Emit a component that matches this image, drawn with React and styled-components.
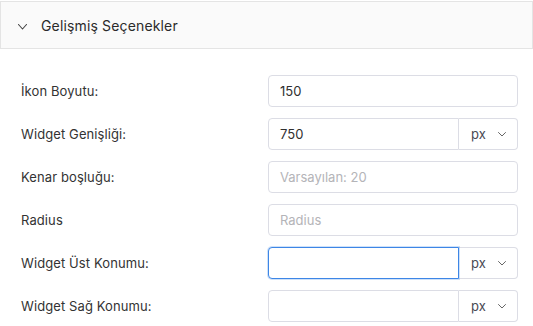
import React from "react";
import styled, { createGlobalStyle } from "styled-components";

const Global = createGlobalStyle`
  html, body { margin: 0; padding: 0; background: #fff; }
  body { font-family: Inter, "Noto Sans", sans-serif; color: #2b2b2b; }
  * { box-sizing: border-box; }
`;

const Panel = styled.div`
  width: 533px;
  padding-top: 1px;
`;

const Header = styled.div`
  height: 48px;
  display: flex;
  align-items: center;
  gap: 14px;
  padding-left: 17px;
  background: #fafafa;
  border: 1px solid #e4e4e4;
  font-size: 14px;
  color: #2a2a2a;
  letter-spacing: 0.15px;
`;

const HeaderIcon = styled.span`
  display: flex;
  margin-top: 3px;
`;

const Body = styled.div`
  padding: 26px 15px 0 21px;
  display: flex;
  flex-direction: column;
  gap: 11px;
`;

const Row = styled.div`
  display: flex;
  align-items: center;
  height: 32px;
`;

const Label = styled.div`
  flex: 1;
  font-size: 13px;
  color: #333;
  letter-spacing: 0.1px;
`;

const Field = styled.div`
  width: 250px;
  height: 32px;
  display: flex;
`;

const Input = styled.div`
  flex: 1;
  height: 32px;
  display: flex;
  align-items: center;
  padding: 0 11px;
  font-size: 13px;
  color: ${(p) => (p.$placeholder ? "#b4b4b8" : "#2f2f2f")};
  border: 1px solid ${(p) => (p.$focus ? "#3d86e6" : "#dcdde5")};
  box-shadow: ${(p) => (p.$focus ? "0 0 0 1px rgba(61,134,230,0.25)" : "none")};
  border-radius: ${(p) => (p.$addon ? "4px 0 0 4px" : "4px")};
  background: #fff;
  position: relative;
  z-index: ${(p) => (p.$focus ? 1 : 0)};
`;

const Addon = styled.div`
  width: 59px;
  height: 32px;
  display: flex;
  align-items: center;
  gap: 12px;
  padding-left: 12px;
  font-size: 13px;
  color: #4a4a55;
  border: 1px solid #dcdde5;
  border-left: none;
  border-radius: 0 4px 4px 0;
`;

const Chevron = ({ w = 9, h = 5, color = "#555", sw = 1 }) => (
  <svg width={w} height={h + 1} viewBox={`0 0 ${w} ${h + 1}`} fill="none">
    <path d={`M0.5 0.5L${w / 2} ${h}L${w - 0.5} 0.5`} stroke={color} strokeWidth={sw} strokeLinecap="round" strokeLinejoin="round" />
  </svg>
);

const rows = [
  { label: "İkon Boyutu:", value: "150" },
  { label: "Widget Genişliği:", value: "750", addon: true },
  { label: "Kenar boşluğu:", placeholder: "Varsayılan: 20" },
  { label: "Radius", placeholder: "Radius" },
  { label: "Widget Üst Konumu:", value: "", addon: true, focus: true },
  { label: "Widget Sağ Konumu:", value: "", addon: true },
];

export default function App() {
  return (
    <>
      <Global />
      <Panel>
        <Header>
          <HeaderIcon>
            <Chevron w={9} h={5} color="#444" sw={1.1} />
          </HeaderIcon>
          <span>Gelişmiş Seçenekler</span>
        </Header>
        <Body>
          {rows.map((r) => (
            <Row key={r.label}>
              <Label>{r.label}</Label>
              <Field>
                <Input $addon={r.addon} $focus={r.focus} $placeholder={!!r.placeholder}>
                  {r.placeholder || r.value}
                </Input>
                {r.addon && (
                  <Addon>
                    px <Chevron w={8} h={4} color="#666" />
                  </Addon>
                )}
              </Field>
            </Row>
          ))}
        </Body>
      </Panel>
    </>
  );
}
